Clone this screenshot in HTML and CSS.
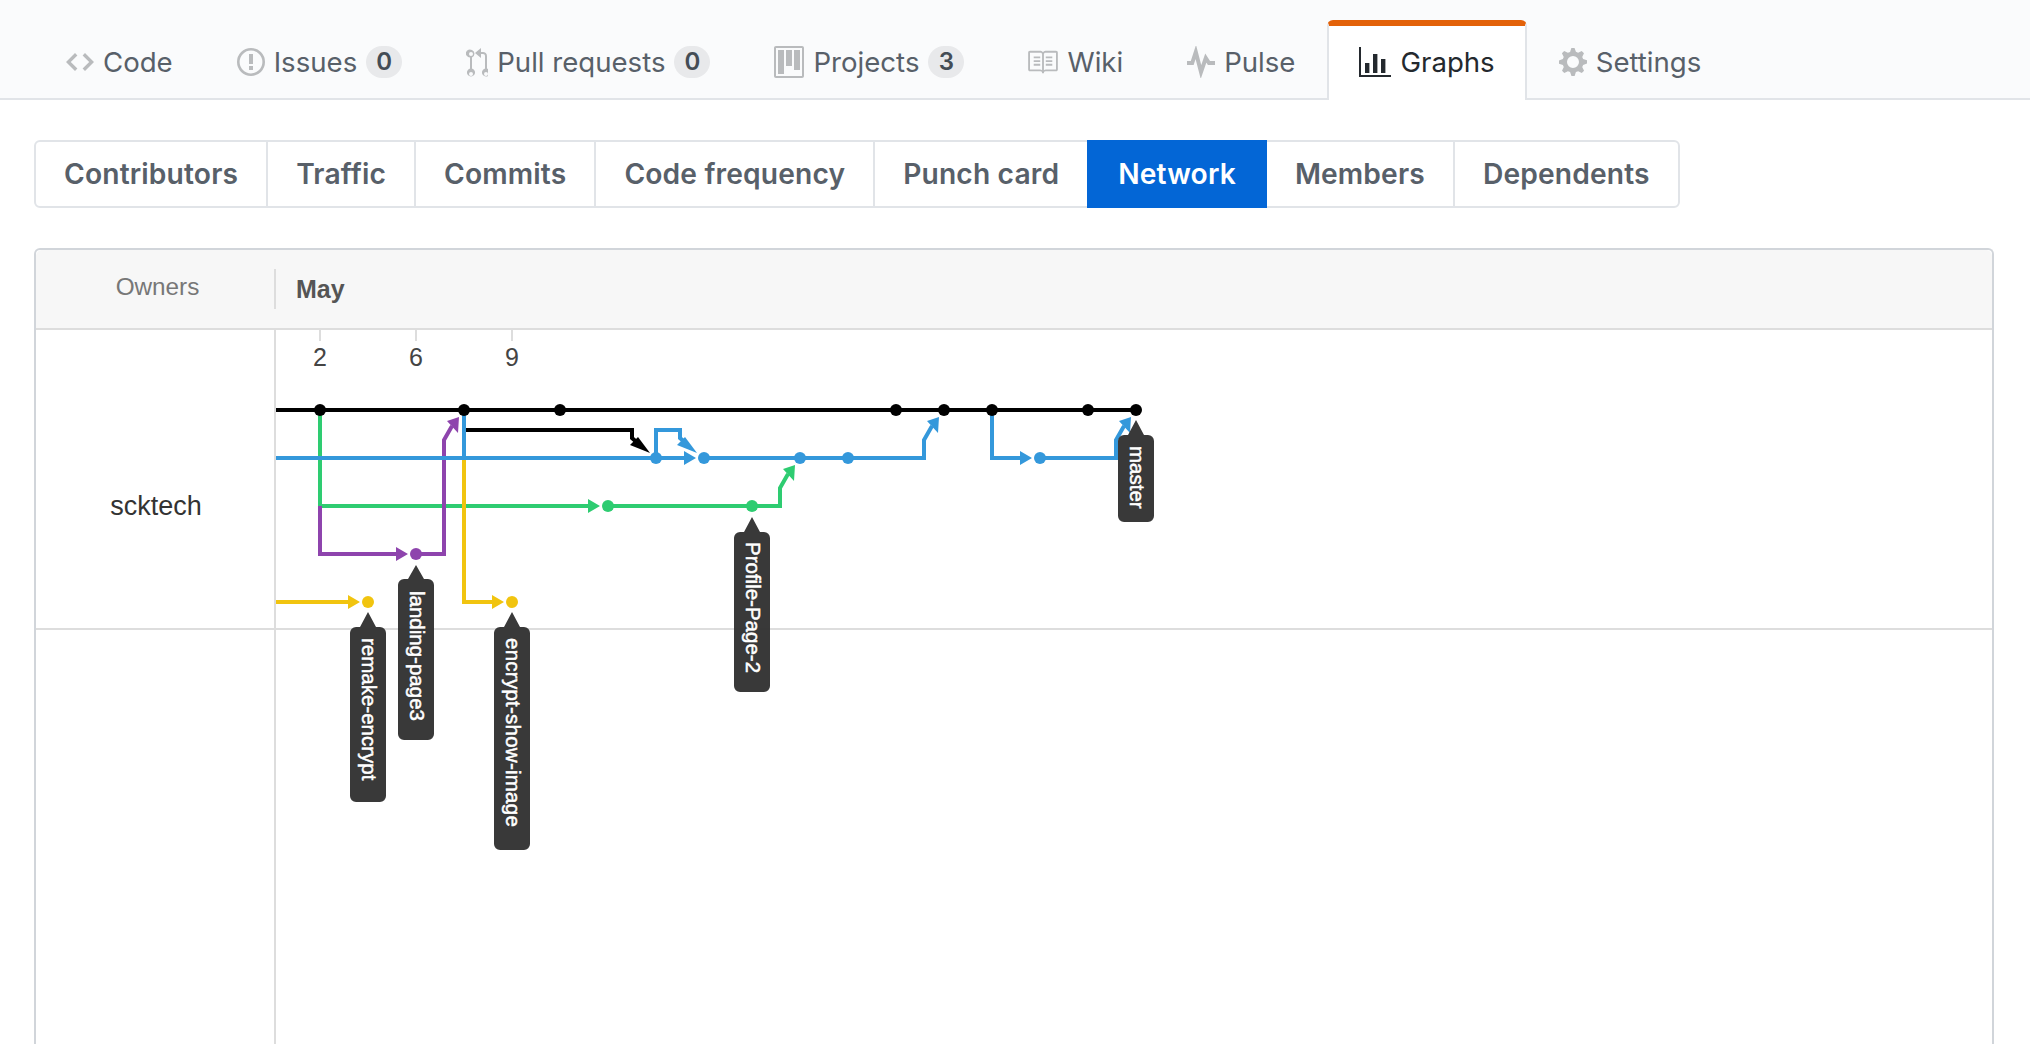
FILE: index.html
```html
<!DOCTYPE html>
<html lang="en">
<head>
    <meta charset="UTF-8">
    <title>Network graph</title>
    <link rel="stylesheet" href="styles.css">
</head>
<body>

    <!-- Repo tabs -->
    <nav class="repo-nav">
        <a class="repo-tab">
            <svg class="tab-icon" width="28" height="26" viewBox="0 0 14 13"><path d="M9.500 2 8.300 3.200 11.600 6.500 8.300 9.800 9.500 11 14 6.500zM4.500 2 0 6.500 4.500 11 5.700 9.800 2.400 6.500 5.700 3.200z"/></svg>
            Code
        </a>
        <a class="repo-tab">
            <svg class="tab-icon" width="28" height="28" viewBox="0 0 14 14"><path fill-rule="evenodd" d="M7 1.300A5.700 5.700 0 1 1 7 12.700 5.700 5.700 0 0 1 7 1.300zM7 0a7 7 0 1 0 0 14A7 7 0 0 0 7 0zM6 3h2v5H6zM6 9h2v2H6z"/></svg>
            Issues <span class="counter">0</span>
        </a>
        <a class="repo-tab">
            <svg class="tab-icon" width="22" height="32" viewBox="0.500 0 11 16"><path fill-rule="evenodd" d="M11 11.300V5c0-1.300-1-2-2-2H8V1L5 3.500 8 6V4h1c.6 0 1 .4 1 1v6.300a2 2 0 1 0 1 0zM10.500 15a1 1 0 1 1 0-2 1 1 0 0 1 0 2zM3.500 2a2 2 0 1 0-1 3.700v5.600a2 2 0 1 0 1 0V5.700A2 2 0 0 0 3.500 2zM3 15a1 1 0 1 1 0-2 1 1 0 0 1 0 2zM3 5a1 1 0 1 1 0-2 1 1 0 0 1 0 2z"/></svg>
            Pull requests <span class="counter">0</span>
        </a>
        <a class="repo-tab">
            <svg class="tab-icon" width="30" height="32" viewBox="0 0 15 16"><path fill-rule="evenodd" d="M10 12h3V2h-3v10zM6 10h3V2H6v8zM2 14h3V2H2v12zM1 15h13V1H1v14zM14 0H1C.4 0 0 .4 0 1v14c0 .6.4 1 1 1h13c.6 0 1-.4 1-1V1c0-.6-.4-1-1-1z"/></svg>
            Projects <span class="counter">3</span>
        </a>
        <a class="repo-tab">
            <svg class="tab-icon" width="30" height="26" viewBox="0 0 16 14"><path fill-rule="evenodd" d="M3 4h3.500v1H3zM3 6h3.500v1H3zM3 8h3.500v1H3zM9.500 4H13v1H9.500zM9.500 6H13v1H9.500zM9.500 8H13v1H9.500zM15 1H9.300C8.700 1 8.300 1.400 8 1.800 7.700 1.400 7.300 1 6.700 1H1C.4 1 0 1.400 0 2v9c0 .6.4 1 1 1h5.600c.8 0 .9.500.9 1h1c0-.5.100-1 .9-1H15c.6 0 1-.4 1-1V2c0-.6-.4-1-1-1zM7.500 11.500c-.3-.3-.6-.5-1-.5H1V2h5.700c.4 0 .8.300.8.800zM15 11H9.500c-.4 0-.7.200-1 .5V2.800c0-.5.400-.8.800-.8H15z"/></svg>
            Wiki
        </a>
        <a class="repo-tab">
            <svg class="tab-icon pulse-icon" width="28" height="32" viewBox="0 0 14 16"><path d="M0 8.500H2.600L4.400 3 7 13 9.400 6 11 8.500H14"/></svg>
            Pulse
        </a>
        <a class="repo-tab selected">
            <svg class="tab-icon" width="32" height="30" viewBox="0 0 16 15"><path d="M16 14v1H0V0h1v14zM3 8h2.200v5H3zM7 3.500h2.200V13H7zM11 6h2.200v7H11z"/></svg>
            Graphs
        </a>
        <a class="repo-tab">
            <svg class="tab-icon" width="28" height="32" viewBox="0 0 14 16"><path fill-rule="evenodd" d="M14 8.770V7.170l-1.940-.640-.450-1.090.880-1.840-1.130-1.130-1.810.910-1.090-.450L7.770 1H6.170l-.630 1.940-1.110.450-1.840-.880-1.130 1.130.910 1.810-.450 1.090L0 7.230v1.590l1.940.640.450 1.090-.880 1.840 1.130 1.130 1.810-.910 1.090.450.690 1.920h1.590l.630-1.940 1.110-.450 1.840.880 1.130-1.130-.920-1.810.470-1.090zM7 11a3 3 0 1 1 0-6 3 3 0 0 1 0 6z"/></svg>
            Settings
        </a>
    </nav>

    <!-- Graph sub menu -->
    <div class="subnav">
        <a class="subnav-item">Contributors</a>
        <a class="subnav-item">Traffic</a>
        <a class="subnav-item">Commits</a>
        <a class="subnav-item">Code frequency</a>
        <a class="subnav-item">Punch card</a>
        <a class="subnav-item selected">Network</a>
        <a class="subnav-item">Members</a>
        <a class="subnav-item">Dependents</a>
    </div>

    <!-- Network graph -->
    <div class="network">
        <div class="network-head">
            <div class="owners-head">Owners</div>
            <div class="month">May</div>
        </div>
        <div class="network-row">
            <div class="owner">scktech</div>
            <div class="timeline"></div>
        </div>
        <div class="network-row-empty">
            <div class="owner"></div>
            <div class="timeline"></div>
        </div>

        <svg class="graph" width="1200" height="680" viewBox="276 329 1200 680">
            <!-- day ticks -->
            <g class="ticks">
                <path d="M320 329v12M416 329v12M512 329v12"/>
            </g>
            <text class="day" x="320" y="366">2</text>
            <text class="day" x="416" y="366">6</text>
            <text class="day" x="512" y="366">9</text>

            <!-- green -->
            <g fill="none" stroke="#2ecc71" stroke-width="4">
                <path d="M320 410V506H590M608 506H780V488L788 474"/>
            </g>
            <path fill="#2ecc71" d="M588 499l12 7-12 7zM795 465l-12 4 11 12z"/>
            <circle cx="608" cy="506" r="6" fill="#2ecc71"/>
            <circle cx="752" cy="506" r="6" fill="#2ecc71"/>

            <!-- yellow -->
            <g fill="none" stroke="#f1c40f" stroke-width="4">
                <path d="M276 602H350M464 458V602H494"/>
            </g>
            <path fill="#f1c40f" d="M348 595l12 7-12 7zM492 595l12 7-12 7z"/>
            <circle cx="368" cy="602" r="6" fill="#f1c40f"/>
            <circle cx="512" cy="602" r="6" fill="#f1c40f"/>

            <!-- purple -->
            <g fill="none" stroke="#8e44ad" stroke-width="4">
                <path d="M320 506V554H398M416 554H444V440L452 426"/>
            </g>
            <path fill="#8e44ad" d="M396 547l12 7-12 7zM459 417l-12 4 11 12z"/>
            <circle cx="416" cy="554" r="6" fill="#8e44ad"/>

            <!-- blue -->
            <g fill="none" stroke="#3498db" stroke-width="4">
                <path d="M276 458H686M704 458H924V440L932 426"/>
                <path d="M464 410V458"/>
                <path d="M656 458V430H680V438L688 445"/>
                <path d="M992 410V458H1022M1040 458H1116V440L1124 426"/>
            </g>
            <path fill="#3498db" d="M684 451l12 7-12 7zM697 453l-12-16-8 8zM939 417l-12 4 11 12zM1020 451l12 7-12 7zM1131 417l-12 4 11 12z"/>
            <circle cx="656" cy="458" r="6" fill="#3498db"/>
            <circle cx="704" cy="458" r="6" fill="#3498db"/>
            <circle cx="800" cy="458" r="6" fill="#3498db"/>
            <circle cx="848" cy="458" r="6" fill="#3498db"/>
            <circle cx="1040" cy="458" r="6" fill="#3498db"/>

            <!-- black -->
            <g fill="none" stroke="#000" stroke-width="4">
                <path d="M276 410H1136"/>
                <path d="M466 430H632V438L640 445"/>
            </g>
            <path fill="#000" d="M650 453l-12-16-8 8z"/>
            <circle cx="320" cy="410" r="6"/>
            <circle cx="464" cy="410" r="6"/>
            <circle cx="560" cy="410" r="6"/>
            <circle cx="896" cy="410" r="6"/>
            <circle cx="944" cy="410" r="6"/>
            <circle cx="992" cy="410" r="6"/>
            <circle cx="1088" cy="410" r="6"/>
            <circle cx="1136" cy="410" r="6"/>

            <!-- branch labels -->
            <g class="flag">
                <path d="M368 612l8 15h4a6 6 0 0 1 6 6v163a6 6 0 0 1-6 6h-24a6 6 0 0 1-6-6V633a6 6 0 0 1 6-6h4z"/>
                <path d="M416 565l8 14h4a6 6 0 0 1 6 6v149a6 6 0 0 1-6 6h-24a6 6 0 0 1-6-6V585a6 6 0 0 1 6-6h4z"/>
                <path d="M512 612l8 15h4a6 6 0 0 1 6 6v211a6 6 0 0 1-6 6h-24a6 6 0 0 1-6-6V633a6 6 0 0 1 6-6h4z"/>
                <path d="M752 517l8 15h4a6 6 0 0 1 6 6v148a6 6 0 0 1-6 6h-24a6 6 0 0 1-6-6V538a6 6 0 0 1 6-6h4z"/>
                <path d="M1136 420l8 15h4a6 6 0 0 1 6 6v75a6 6 0 0 1-6 6h-24a6 6 0 0 1-6-6V441a6 6 0 0 1 6-6h4z"/>
            </g>
            <text class="flag-text" transform="translate(362 638) rotate(90)">remake-encrypt</text>
            <text class="flag-text" transform="translate(410 591) rotate(90)">landing-page3</text>
            <text class="flag-text wide" transform="translate(506 638) rotate(90)">encrypt-show-image</text>
            <text class="flag-text" transform="translate(746 542) rotate(90)">Profile-Page-2</text>
            <text class="flag-text" transform="translate(1130 446) rotate(90)">master</text>
        </svg>
    </div>

</body>
</html>
```

FILE: styles.css
```css
html, body {
    height: 100%;
    overflow: hidden;
}
body {
    margin: 0;
    background-color: #fff;
    font-family: Inter, "Liberation Sans", sans-serif;
}

/* repo tabs */
.repo-nav {
    display: flex;
    height: 100px;
    box-sizing: border-box;
    padding: 20px 0 0 34px;
    background-color: #fafbfc;
    border-bottom: 2px solid #e1e4e8;
}
.repo-tab {
    display: flex;
    align-items: center;
    gap: 9px;
    padding: 6px 32px 0;
    font-size: 27.6px;
    color: #586069;
    white-space: nowrap;
}
.tab-icon {
    fill: #b9bbbd;
    flex: none;
}
.pulse-icon {
    fill: none;
    stroke: #b9bbbd;
    stroke-width: 2;
}
.counter {
    display: inline-block;
    min-width: 36px;
    height: 32px;
    line-height: 32px;
    text-align: center;
    border-radius: 20px;
    background-color: rgba(27, 31, 35, 0.08);
    font-size: 24px;
    font-weight: 600;
    color: #444d56;
}
.repo-tab.selected {
    margin-bottom: -2px;
    padding: 0 30px 2px;
    background-color: #fff;
    color: #24292e;
    border: solid #e1e4e8;
    border-width: 0 2px;
    border-top: 6px solid #e36209;
    border-radius: 6px 6px 0 0;
}
.repo-tab.selected .tab-icon {
    fill: #24292e;
}

/* sub menu */
.subnav {
    display: inline-flex;
    margin: 40px 0 0 34px;
    height: 68px;
    box-sizing: border-box;
    border: 2px solid #e1e4e8;
    border-radius: 6px;
    vertical-align: top;
}
.subnav-item {
    display: flex;
    align-items: center;
    padding: 0 28px 1px;
    font-size: 28.2px;
    font-weight: 600;
    letter-spacing: 0.15px;
    color: #586069;
    border-left: 2px solid #e1e4e8;
}
.subnav-item:first-child {
    border-left: none;
}
.subnav-item.selected {
    background-color: #0366d6;
    color: #fff;
    margin: -2px 0;
    padding: 0 31px 1px;
    border-left: none;
}
.subnav-item.selected + .subnav-item {
    border-left: none;
}

/* network graph */
.network {
    position: relative;
    margin: 40px 36px 0 34px;
    height: 796px;
    box-sizing: border-box;
    border: 2px solid #d1d5da;
    border-bottom: none;
    border-radius: 6px 6px 0 0;
    font-family: "Liberation Sans", Arial, sans-serif;
}
.network-head {
    display: flex;
    height: 80px;
    box-sizing: border-box;
    background-color: #f7f7f7;
    border-bottom: 2px solid #ddd;
    border-radius: 6px 6px 0 0;
    align-items: center;
}
.owners-head {
    width: 240px;
    box-sizing: border-box;
    height: 40px;
    padding-left: 5px;
    line-height: 36px;
    text-align: center;
    font-size: 24.3px;
    color: #777;
    border-right: 2px solid #ddd;
}
.month {
    padding-left: 20px;
    font-size: 25px;
    font-weight: bold;
    color: #555;
}
.network-row, .network-row-empty {
    display: flex;
}
.network-row {
    height: 298px;
    border-bottom: 2px solid #ddd;
}
.network-row-empty {
    height: 414px;
}
.owner {
    width: 240px;
    box-sizing: border-box;
    padding: 54px 0 0 2px;
    border-right: 2px solid #ddd;
    display: flex;
    align-items: center;
    justify-content: center;
    font-size: 27px;
    color: #333;
}
.timeline {
    flex: 1;
}
.graph {
    position: absolute;
    left: 240px;
    top: 79px;
}
.ticks path {
    stroke: #ddd;
    stroke-width: 2;
    fill: none;
}
.day {
    font-size: 25px;
    fill: #444;
    text-anchor: middle;
}
.flag path {
    fill: #333;
    fill-opacity: 0.97;
}
.flag-text {
    font-size: 20.5px;
    fill: #fff;
    stroke: #fff;
    stroke-width: 0.5;
}
.flag-text.wide {
    letter-spacing: 0.25px;
}
```
